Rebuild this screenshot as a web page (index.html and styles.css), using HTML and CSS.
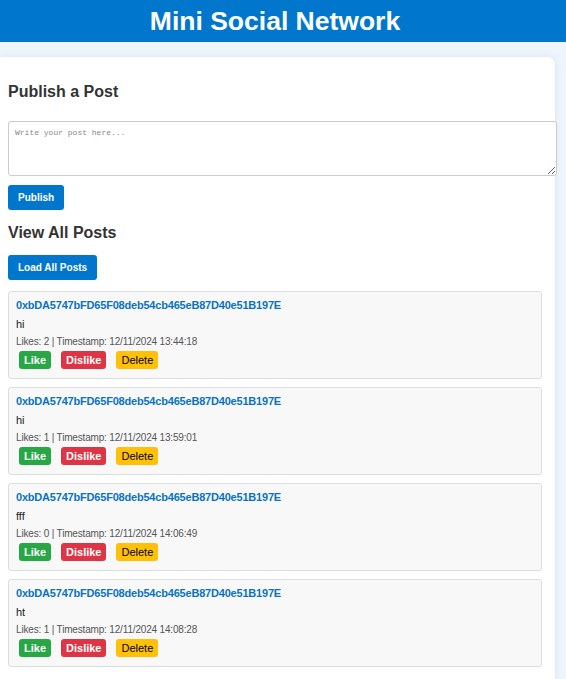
FILE: index.html
```html
<!DOCTYPE html>
<html>
<head>
<meta charset="utf-8">
<link rel="stylesheet" href="styles.css">
</head>
<body>
<header class="topbar"><h1 class="title">Mini Social Network</h1></header>
<main class="container">
  <h2 class="section-title first">Publish a Post</h2>
  <textarea class="post-input" placeholder="Write your post here..."></textarea>
  <button class="btn-primary publish">Publish</button>
  <h2 class="section-title">View All Posts</h2>
  <button class="btn-primary load">Load All Posts</button>
  <div class="posts">
    <div class="post">
      <div class="author">0xbDA5747bFD65F08deb54cb465eB87D40e51B197E</div>
      <div class="content">hi</div>
      <div class="meta">Likes: 2 | Timestamp: 12/11/2024 13:44:18</div>
      <div class="actions"><button class="btn like">Like</button><button class="btn dislike">Dislike</button><button class="btn delete">Delete</button></div>
    </div>
    <div class="post">
      <div class="author">0xbDA5747bFD65F08deb54cb465eB87D40e51B197E</div>
      <div class="content">hi</div>
      <div class="meta">Likes: 1 | Timestamp: 12/11/2024 13:59:01</div>
      <div class="actions"><button class="btn like">Like</button><button class="btn dislike">Dislike</button><button class="btn delete">Delete</button></div>
    </div>
    <div class="post">
      <div class="author">0xbDA5747bFD65F08deb54cb465eB87D40e51B197E</div>
      <div class="content">fff</div>
      <div class="meta">Likes: 0 | Timestamp: 12/11/2024 14:06:49</div>
      <div class="actions"><button class="btn like">Like</button><button class="btn dislike">Dislike</button><button class="btn delete">Delete</button></div>
    </div>
    <div class="post">
      <div class="author">0xbDA5747bFD65F08deb54cb465eB87D40e51B197E</div>
      <div class="content">ht</div>
      <div class="meta">Likes: 1 | Timestamp: 12/11/2024 14:08:28</div>
      <div class="actions"><button class="btn like">Like</button><button class="btn dislike">Dislike</button><button class="btn delete">Delete</button></div>
    </div>
  </div>
</main>
</body>
</html>
```
FILE: styles.css
```css
* { box-sizing: border-box; }
html, body { margin: 0; padding: 0; }
body {
  background: #eef5fc;
  font-family: "Liberation Sans", Arial, sans-serif;
  color: #333;
  overflow: hidden;
}
.topbar {
  background: #0077cc;
  height: 42px;
  display: flex;
  align-items: center;
  justify-content: center;
  padding-right: 16px;
}
.title {
  margin: 0;
  color: #fff;
  font-size: 26.5px;
  font-weight: bold;
  line-height: 1;
}
.container {
  margin-top: 15px;
  width: 555px;
  background: #fff;
  border-radius: 0 8px 8px 0;
  box-shadow: 0 0 8px rgba(0, 0, 0, 0.08);
  padding: 24px 13px 20px 8px;
}
.section-title {
  margin: 0 0 12px;
  font-size: 16px;
  font-weight: bold;
  color: #333;
  line-height: 20px;
}
.first { margin-top: 1px; margin-bottom: 11px; }
.post-input {
  display: block;
  width: 549px;
  height: 55px;
  margin: 19px 0 9px;
  padding: 6px;
  border: 1px solid #ccc;
  border-radius: 3px;
  font-family: "Liberation Mono", monospace;
  font-size: 8px;
  resize: vertical;
  background: #fff;
}
.post-input::placeholder { color: #888; }
.btn-primary {
  display: block;
  background: #0077cc;
  color: #fff;
  border: none;
  border-radius: 3px;
  height: 25px;
  padding: 0 10px;
  font-family: "Liberation Sans", Arial, sans-serif;
  font-size: 10px;
  font-weight: bold;
  margin-bottom: 12px;
}
.publish { margin-bottom: 13px; }
.load { margin-bottom: 11px; }
.posts { display: flex; flex-direction: column; gap: 8px; }
.post {
  background: #f8f8f8;
  border: 1px solid #ddd;
  border-radius: 3px;
  width: 534px;
  height: 88px;
  padding: 5px 7px;
}
.author {
  color: #0a73bf;
  font-weight: bold;
  font-size: 11px;
  letter-spacing: -0.2px;
  line-height: 16px;
}
.content { font-size: 11px; line-height: 14px; margin-top: 4px; color: #222; }
.meta { font-size: 10px; letter-spacing: -0.17px; color: #555; line-height: 13px; margin-top: 4px; }
.actions { display: flex; gap: 10px; margin-top: 3px; padding-left: 3px; }
.btn {
  border: none;
  border-radius: 3px;
  height: 18px;
  padding: 0 5px;
  font-family: "Liberation Sans", Arial, sans-serif;
  font-size: 11px;
}
.like { background: #28a745; color: #fff; font-weight: bold; }
.dislike { background: #dc3545; color: #fff; font-weight: bold; }
.delete { background: #ffc107; color: #000; }
```
